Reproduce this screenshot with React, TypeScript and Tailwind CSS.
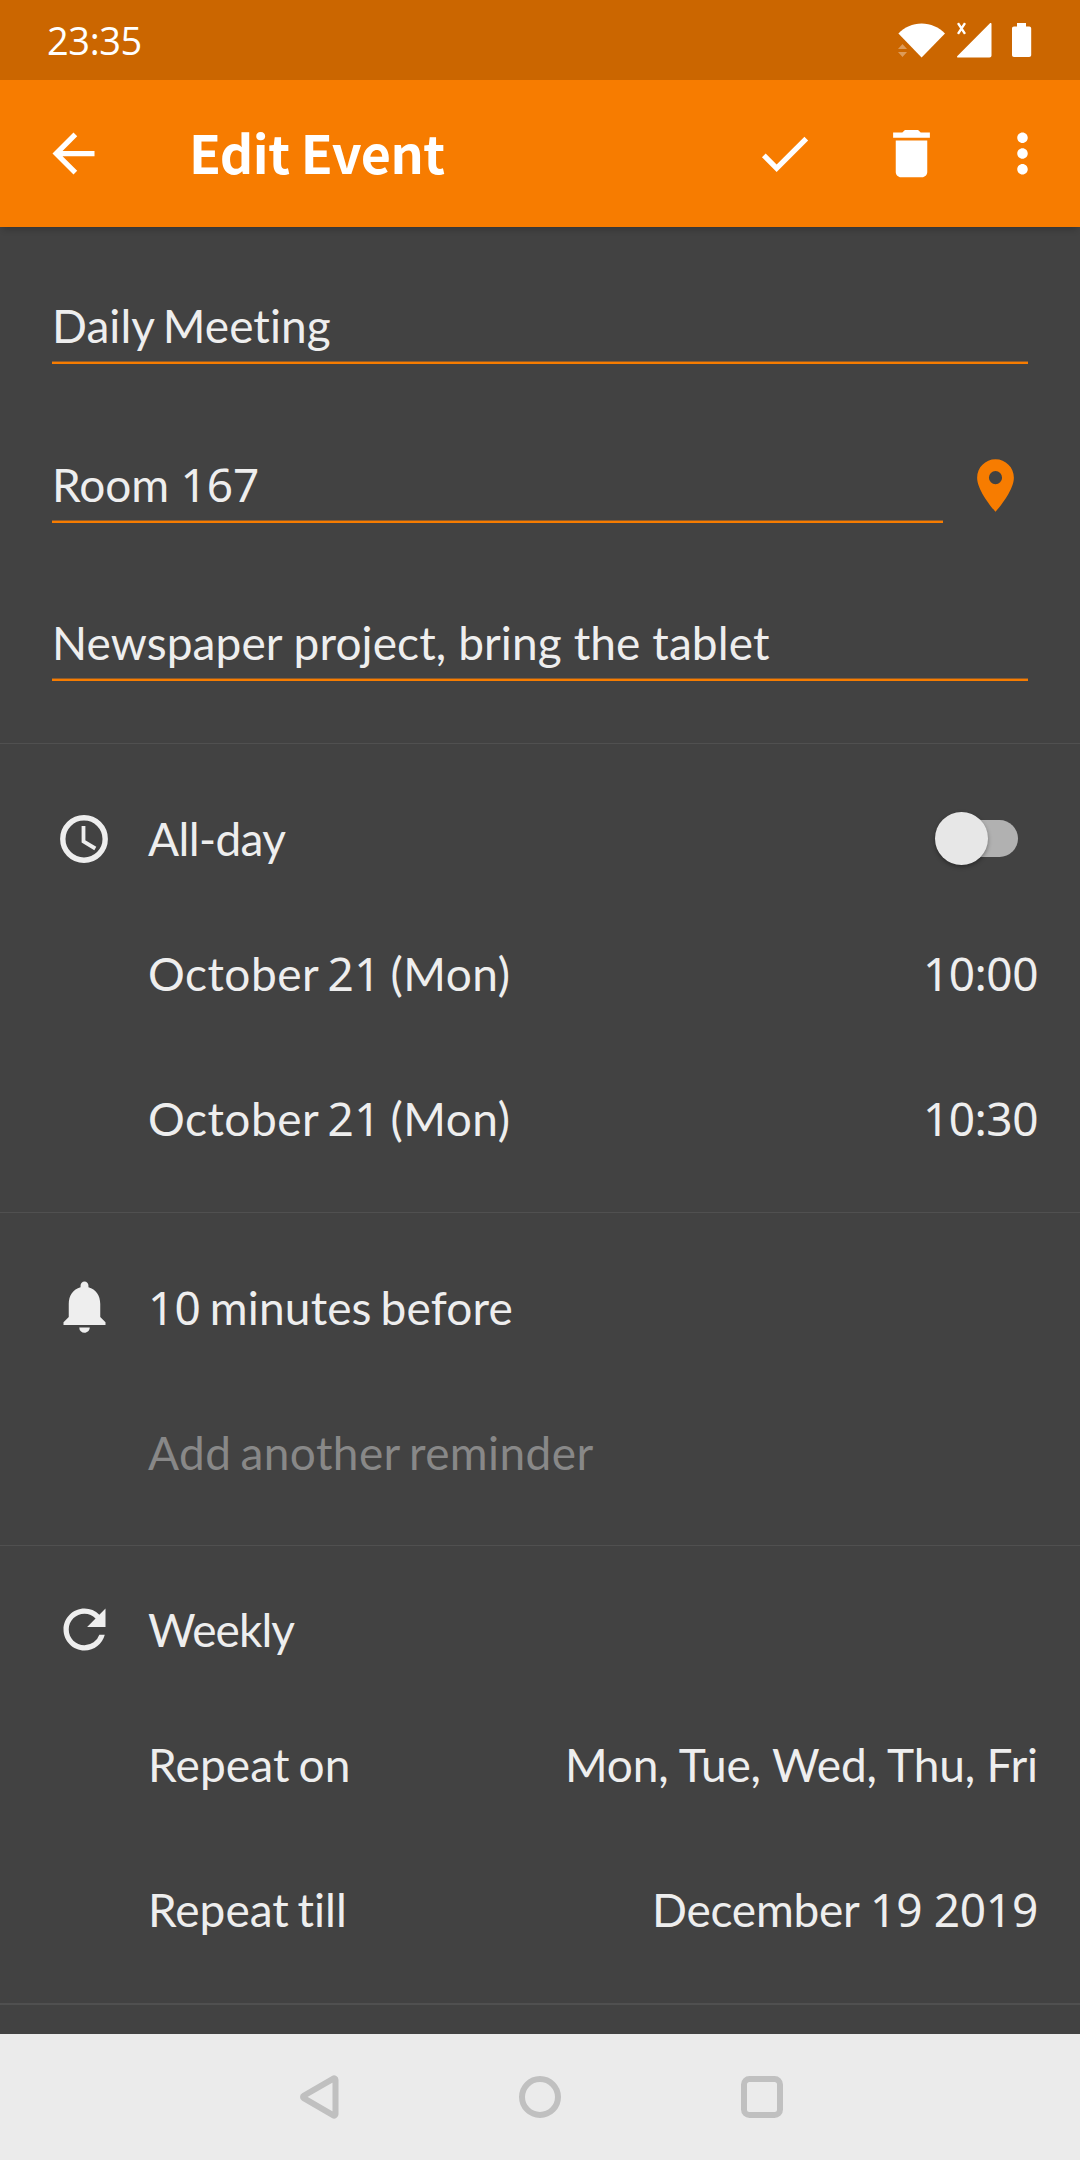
import type { ReactNode } from "react";
import { MdArrowBack, MdCheck, MdDelete, MdMoreVert, MdNotifications, MdPlace, MdRefresh } from "react-icons/md";

/* Letters are set in Lato, numerals in Noto Sans. */
function Label({ text, className = "" }: { text: string; className?: string }) {
  return (
    <span className={`whitespace-pre text-[46px] leading-[56px] [font-variant-ligatures:none] ${className}`}>
      {text.split(/([\d:]+)/).map((part, i) =>
        i % 2 ? (
          <span key={i} className="font-['Noto_Sans',sans-serif]">{part}</span>
        ) : (
          part
        ),
      )}
    </span>
  );
}

function Field({ text, className = "" }: { text: string; className?: string }) {
  return (
    <div className={`flex flex-1 flex-col ${className}`}>
      <Label text={text} className="mb-[7px]" />
      <div className="h-[3px] border-t border-[#8f5c2b] bg-[#f77c00]" />
    </div>
  );
}

function Row({
  icon,
  label,
  value,
  tall = true,
}: {
  icon?: ReactNode;
  label: ReactNode;
  value?: ReactNode;
  tall?: boolean;
}) {
  return (
    <div className={`flex items-center pr-[42px] pl-[53px] ${tall ? "h-[145px]" : "h-[124px]"}`}>
      <div className="mr-8 flex size-[63px] items-center justify-center">{icon}</div>
      <div className="flex-1 pt-0.5">{label}</div>
      {value}
    </div>
  );
}

function StatusBar() {
  return (
    <div className="flex h-20 items-center bg-[#cb6600] pr-12 pl-[47px] text-white">
      <span className="flex-1 font-['Open_Sans',sans-serif] text-[38px] leading-none tracking-[-0.4px]">
        23:35
      </span>
      <svg className="h-9 w-12" viewBox="0 0 48 36" fill="currentColor">
        <path d="M.4 11.6C6.5 5 14.5 1.4 23.6 1.4S40.8 5 47 11.6L23.6 35.4Z" />
        <path opacity=".35" d="M0 27l4.5-5 4.5 5zM0 30h9l-4.5 5z" />
      </svg>
      <svg className="ml-[10px] size-9" viewBox="0 0 36 36" fill="currentColor">
        <path d="M33.7 1.4c.8-.8 1.8-.4 1.8.6v31.6c0 1.2-.8 2-2 2H2c-1 0-1.3-1-.6-1.7Z" />
        <path d="M2 1.2l7 10.600M9 1.200L2 11.800" stroke="currentColor" strokeWidth="2.4" />
      </svg>
      <svg className="ml-5 h-9 w-5" viewBox="0 0 20 36" fill="currentColor">
        <path d="M5 1h9v3.500h3.200c1.200 0 2 .8 2 2v26.400c0 1.200-.8 2-2 2H2c-1.200 0-2-.8-2-2V6.500c0-1.200.8-2 2-2h3z" />
      </svg>
    </div>
  );
}

function AppBar() {
  return (
    <div className="relative flex h-[147px] items-center bg-[#f77c00] pr-[26px] pl-[42px] text-white shadow-[0_6px_6px_-3px_rgba(0,0,0,0.18)]">
      <MdArrowBack size={63} />
      <h1 className="ml-[84px] flex-1 pb-[3px] font-['Noto_Sans_CJK_SC',sans-serif] text-[52px] leading-[60px] font-bold tracking-[-0.5px]">
        Edit Event
      </h1>
      <MdCheck size={63} />
      <MdDelete size={63} className="ml-16" />
      <MdMoreVert size={63} className="ml-12" />
    </div>
  );
}

function ClockIcon() {
  return (
    <svg className="mt-px mr-px size-12" viewBox="0 0 48 48" fill="none" stroke="currentColor">
      <circle cx="24" cy="24" r="21.2" strokeWidth="5.4" />
      <path d="M23.5 11v15.500l11.800 7" strokeWidth="3.8" />
    </svg>
  );
}

function Toggle() {
  return (
    <div className="mr-5 flex h-[53px] w-[83px] items-center">
      <div className="relative z-10 size-[53px] rounded-full bg-[#e7e7e7] shadow-[0_2px_4px_rgba(0,0,0,0.35)]" />
      <div className="-ml-[38px] h-[37px] w-[68px] rounded-full bg-[#b1b1b1]" />
    </div>
  );
}

function NavBar() {
  return (
    <div className="flex h-[126px] items-center justify-center gap-[176px] bg-[#ebebeb] text-[#c0c0c0]">
      <svg className="size-[46px]" viewBox="0 0 46 46" fill="none" stroke="currentColor" strokeWidth="6">
        <path
          strokeLinejoin="round"
          d="M40.500 5.800v34.400a1.400 1.400 0 0 1-2.100 1.200L8.700 24.200a1.400 1.400 0 0 1 0-2.400L38.400 4.600a1.400 1.400 0 0 1 2.100 1.200z"
        />
      </svg>
      <svg className="size-[46px]" viewBox="0 0 46 46" fill="none" stroke="currentColor" strokeWidth="6">
        <circle cx="23" cy="23" r="18" />
      </svg>
      <svg className="size-[46px]" viewBox="0 0 46 46" fill="none" stroke="currentColor" strokeWidth="6">
        <rect x="5" y="5" width="36" height="36" rx="5.5" />
      </svg>
    </div>
  );
}

export default function App() {
  return (
    <div className="flex h-[2160px] w-[1080px] flex-col overflow-hidden bg-[#424242] font-[Lato,sans-serif] text-[#eeeeee]">
      <StatusBar />
      <AppBar />
      <main className="flex-1">
        <section className="flex h-[516px] flex-col gap-[92px] px-[52px] pt-[71px]">
          <Field text="Daily Meeting" className="flex-none tracking-[0.05px] [word-spacing:-3px]" />
          <div className="flex items-end gap-[21px]">
            <Field text="Room 167" className="tracking-[-0.1px]" />
            <MdPlace size={63} className="-mt-2 mr-px mb-1.5 text-[#f77c00]" />
          </div>
          <Field text="Newspaper project, bring the tablet" className="flex-none tracking-[0.1px]" />
        </section>

        <section className="border-t border-[#505050] pt-8 pb-[22px]">
          <Row
            tall={false}
            icon={<ClockIcon />}
            label={<Label text="All-day" className="tracking-[-0.6px]" />}
            value={<Toggle />}
          />
          <Row
            label={<Label text="October 21 (Mon)" className="tracking-[0.5px] [word-spacing:-3px]" />}
            value={<Label text="10:00" className="pt-0.5 tracking-[-0.5px]" />}
          />
          <Row
            label={<Label text="October 21 (Mon)" className="tracking-[0.5px] [word-spacing:-3px]" />}
            value={<Label text="10:30" className="pt-0.5 tracking-[-0.5px]" />}
          />
        </section>

        <section className="border-t border-[#505050] py-[21px]">
          <Row
            icon={<MdNotifications size={63} />}
            label={<Label text="10 minutes before" className="tracking-[0.15px] [word-spacing:-3px]" />}
          />
          <Row
            label={
              <Label text="Add another reminder" className="tracking-[0.4px] text-[#888888] [word-spacing:-3px]" />
            }
          />
        </section>

        <section className="border-y border-b-2 border-[#505050] pt-[21px] pb-[22px]">
          <Row
            tall={false}
            icon={<MdRefresh size={63} />}
            label={<Label text="Weekly" className="tracking-[-0.9px]" />}
          />
          <Row
            label={<Label text="Repeat on" className="tracking-[0.15px] [word-spacing:-3px]" />}
            value={<Label text="Mon, Tue, Wed, Thu, Fri" className="pt-0.5 tracking-[-0.15px]" />}
          />
          <Row
            label={<Label text="Repeat till" className="[word-spacing:-3px]" />}
            value={<Label text="December 19 2019" className="pt-0.5 tracking-[-0.25px]" />}
          />
        </section>
      </main>
      <NavBar />
    </div>
  );
}
